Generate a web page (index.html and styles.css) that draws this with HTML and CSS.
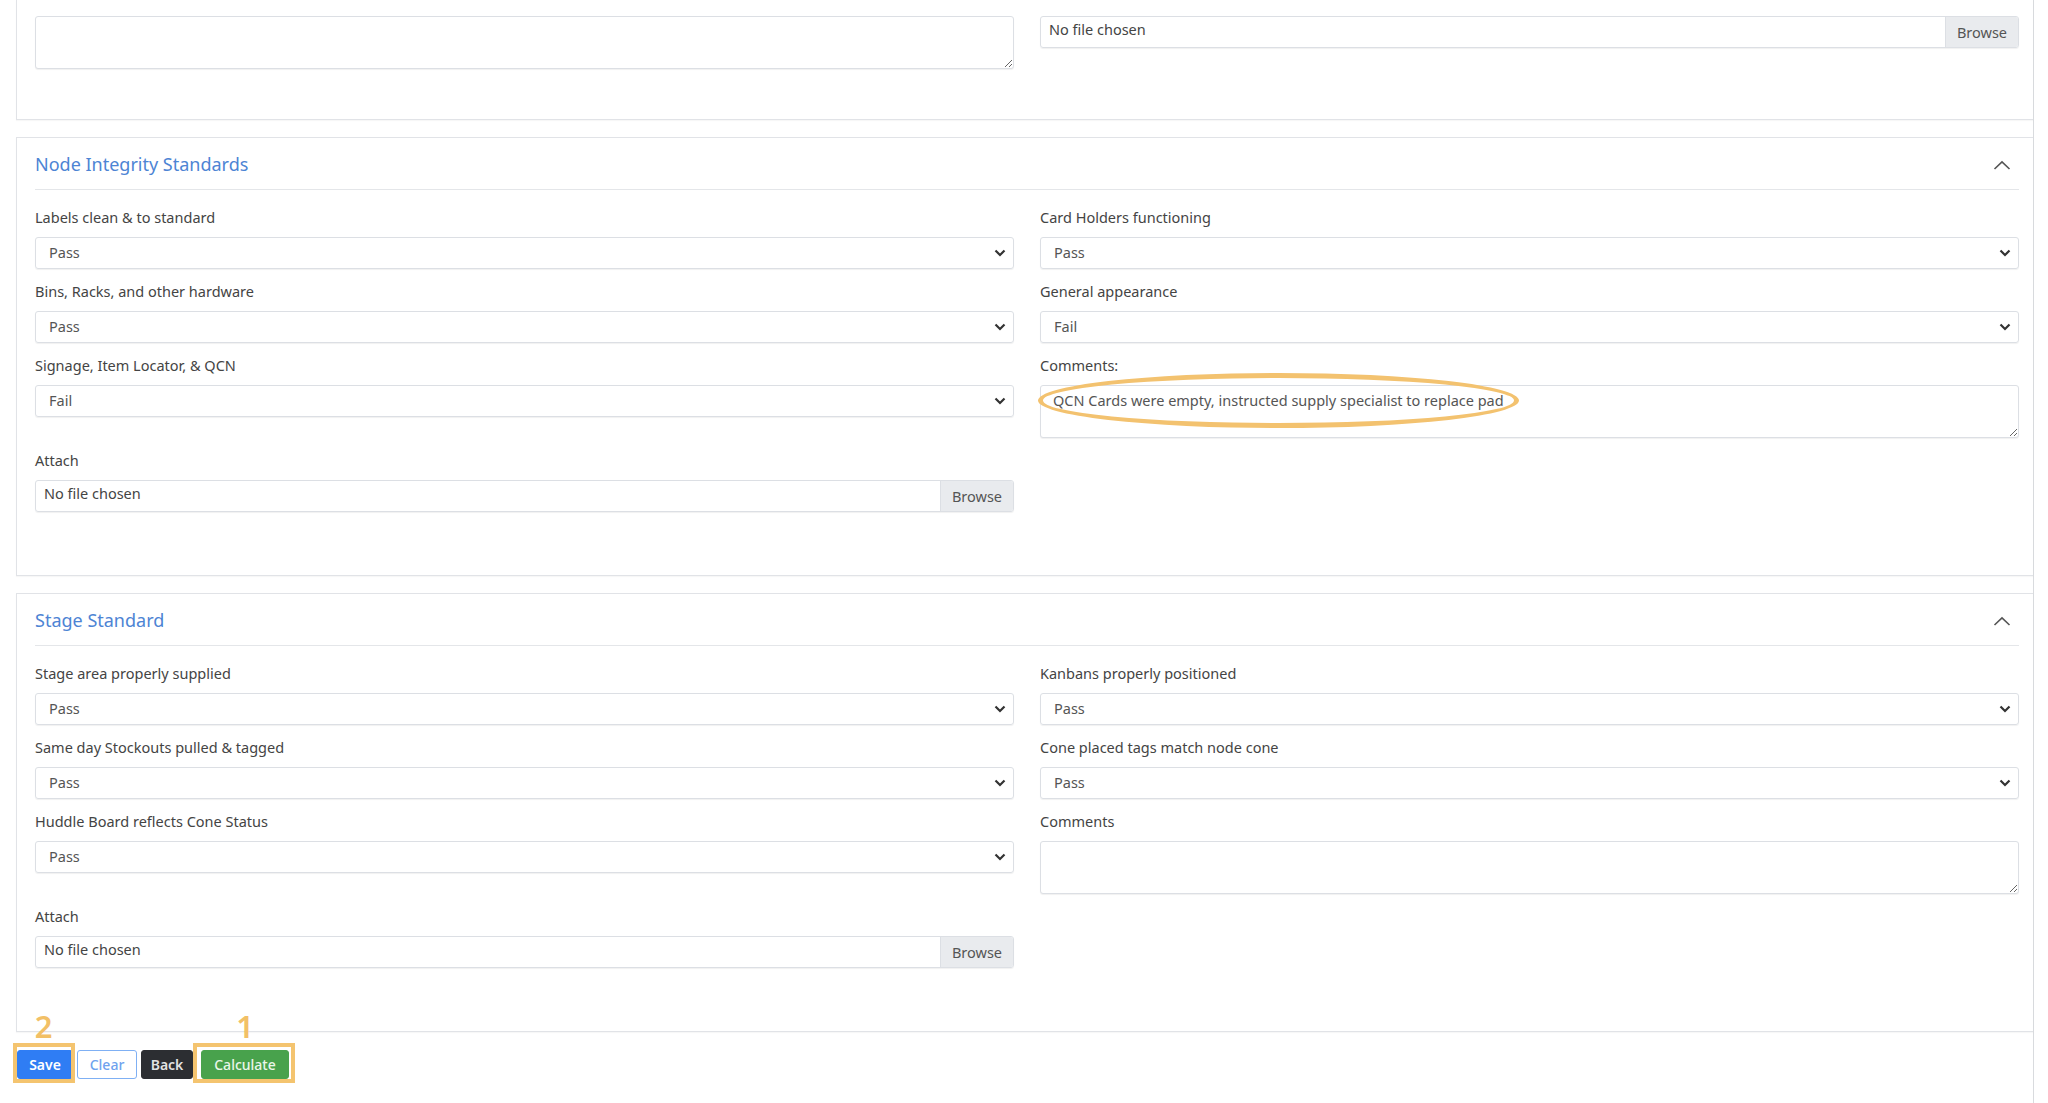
FILE: index.html
```html
<!DOCTYPE html>
<html lang="en">
<head>
<meta charset="utf-8">
<title>Inspection Form</title>
<link rel="stylesheet" href="styles.css">
</head>
<body>
<div class="page">

  <section class="card card-cut">
    <div class="card-body body-first">
      <div class="cols">
        <div class="col">
          <div class="group">
            <textarea class="textarea"></textarea>
          </div>
        </div>
        <div class="col">
          <div class="group">
            <div class="file"><span class="file-text">No file chosen</span><span class="file-btn">Browse</span></div>
          </div>
        </div>
      </div>
    </div>
  </section>

  <section class="card">
    <header class="card-header">
      <h2 class="card-title">Node Integrity Standards</h2>
      <svg class="chev-up" width="18" height="10" viewBox="0 0 18 10"><path d="M1.5 9 L9 1.8 L16.5 9" fill="none" stroke="#555" stroke-width="1.6"/></svg>
    </header>
    <div class="card-body">
      <div class="cols">
        <div class="col">
          <div class="group">
            <label class="label">Labels clean &amp; to standard</label>
            <div class="select"><span>Pass</span><svg width="12" height="8" viewBox="0 0 12 8"><path d="M1.5 1.5 L6 6 L10.5 1.5" fill="none" stroke="#333" stroke-width="2.2"/></svg></div>
          </div>
          <div class="group">
            <label class="label">Bins, Racks, and other hardware</label>
            <div class="select"><span>Pass</span><svg width="12" height="8" viewBox="0 0 12 8"><path d="M1.5 1.5 L6 6 L10.5 1.5" fill="none" stroke="#333" stroke-width="2.2"/></svg></div>
          </div>
          <div class="group">
            <label class="label">Signage, Item Locator, &amp; QCN</label>
            <div class="select"><span>Fail</span><svg width="12" height="8" viewBox="0 0 12 8"><path d="M1.5 1.5 L6 6 L10.5 1.5" fill="none" stroke="#333" stroke-width="2.2"/></svg></div>
          </div>
          <div class="spacer"></div>
          <div class="group">
            <label class="label">Attach</label>
            <div class="file"><span class="file-text">No file chosen</span><span class="file-btn">Browse</span></div>
          </div>
        </div>
        <div class="col">
          <div class="group">
            <label class="label">Card Holders functioning</label>
            <div class="select"><span>Pass</span><svg width="12" height="8" viewBox="0 0 12 8"><path d="M1.5 1.5 L6 6 L10.5 1.5" fill="none" stroke="#333" stroke-width="2.2"/></svg></div>
          </div>
          <div class="group">
            <label class="label">General appearance</label>
            <div class="select"><span>Fail</span><svg width="12" height="8" viewBox="0 0 12 8"><path d="M1.5 1.5 L6 6 L10.5 1.5" fill="none" stroke="#333" stroke-width="2.2"/></svg></div>
          </div>
          <div class="group">
            <label class="label">Comments:</label>
            <div class="annot-wrap">
              <textarea class="textarea">QCN Cards were empty, instructed supply specialist to replace pad</textarea>
              <div class="ellipse"></div>
            </div>
          </div>
        </div>
      </div>
    </div>
  </section>

  <section class="card">
    <header class="card-header">
      <h2 class="card-title">Stage Standard</h2>
      <svg class="chev-up" width="18" height="10" viewBox="0 0 18 10"><path d="M1.5 9 L9 1.8 L16.5 9" fill="none" stroke="#555" stroke-width="1.6"/></svg>
    </header>
    <div class="card-body">
      <div class="cols">
        <div class="col">
          <div class="group">
            <label class="label">Stage area properly supplied</label>
            <div class="select"><span>Pass</span><svg width="12" height="8" viewBox="0 0 12 8"><path d="M1.5 1.5 L6 6 L10.5 1.5" fill="none" stroke="#333" stroke-width="2.2"/></svg></div>
          </div>
          <div class="group">
            <label class="label">Same day Stockouts pulled &amp; tagged</label>
            <div class="select"><span>Pass</span><svg width="12" height="8" viewBox="0 0 12 8"><path d="M1.5 1.5 L6 6 L10.5 1.5" fill="none" stroke="#333" stroke-width="2.2"/></svg></div>
          </div>
          <div class="group">
            <label class="label">Huddle Board reflects Cone Status</label>
            <div class="select"><span>Pass</span><svg width="12" height="8" viewBox="0 0 12 8"><path d="M1.5 1.5 L6 6 L10.5 1.5" fill="none" stroke="#333" stroke-width="2.2"/></svg></div>
          </div>
          <div class="spacer"></div>
          <div class="group">
            <label class="label">Attach</label>
            <div class="file"><span class="file-text">No file chosen</span><span class="file-btn">Browse</span></div>
          </div>
        </div>
        <div class="col">
          <div class="group">
            <label class="label">Kanbans properly positioned</label>
            <div class="select"><span>Pass</span><svg width="12" height="8" viewBox="0 0 12 8"><path d="M1.5 1.5 L6 6 L10.5 1.5" fill="none" stroke="#333" stroke-width="2.2"/></svg></div>
          </div>
          <div class="group">
            <label class="label">Cone placed tags match node cone</label>
            <div class="select"><span>Pass</span><svg width="12" height="8" viewBox="0 0 12 8"><path d="M1.5 1.5 L6 6 L10.5 1.5" fill="none" stroke="#333" stroke-width="2.2"/></svg></div>
          </div>
          <div class="group">
            <label class="label">Comments</label>
            <textarea class="textarea"></textarea>
          </div>
        </div>
      </div>
    </div>
  </section>

  <div class="toolbar">
    <div class="mark mark-save">
      <button class="btn btn-save">Save</button>
      <span class="frame frame-save"></span>
      <span class="digit">2</span>
    </div>
    <button class="btn btn-clear">Clear</button>
    <button class="btn btn-back">Back</button>
    <div class="mark mark-calc">
      <button class="btn btn-calc">Calculate</button>
      <span class="frame frame-calc"></span>
      <span class="digit">1</span>
    </div>
  </div>

</div>
</body>
</html>
```

FILE: styles.css
```css
* { box-sizing: border-box; }

html, body {
  margin: 0;
  padding: 0;
  background: #ffffff;
}

body {
  font-family: "Noto Sans", "Open Sans", sans-serif;
  font-size: 14.5px;
  color: #404040;
  width: 2048px;
  height: 1103px;
  overflow: hidden;
}

.page {
  width: 2034px;
  height: 1103px;
  padding-left: 16px;
  border-right: 1px solid #d9dbde;
}

.card {
  border: 1px solid #e1e3e7;
  border-right: none;
  padding: 0 14px 0 18px;
  margin-bottom: 17px;
  background: #fff;
  box-shadow: 0 1px 1px rgba(0, 0, 0, 0.03);
}

.card-cut {
  border-top: none;
}

.card-header {
  height: 52px;
  display: flex;
  align-items: center;
  justify-content: space-between;
  border-bottom: 1px solid #e4e6e9;
}

.card-title {
  margin: 0;
  font-size: 18px;
  font-weight: 400;
  color: #4d84d4;
}

.chev-up {
  margin-right: 8px;
  margin-top: 2px;
}

.card-body {
  padding: 17px 0 51px;
}

.body-first {
  padding: 16px 0 38px;
}

.cols {
  display: grid;
  grid-template-columns: 979px 979px;
  column-gap: 26px;
}

.group {
  margin-bottom: 12px;
}

.spacer {
  height: 21px;
}

.label {
  display: block;
  line-height: 20px;
  height: 20px;
  margin-bottom: 10px;
  color: #444;
}

.select {
  height: 32px;
  border: 1px solid #dcdfe4;
  border-radius: 3px;
  box-shadow: 0 1px 1px rgba(0, 0, 0, 0.06);
  display: flex;
  align-items: center;
  justify-content: space-between;
  padding: 0 7px 3px 13px;
  color: #555;
}

.select svg {
  margin-top: 3px;
}

.textarea {
  display: block;
  width: 100%;
  height: 53px;
  border: 1px solid #dcdfe4;
  border-radius: 3px;
  box-shadow: 0 1px 1px rgba(0, 0, 0, 0.06);
  padding: 4px 12px;
  font-family: "Noto Sans", "Open Sans", sans-serif;
  font-size: 14.5px;
  line-height: 20px;
  color: #555;
  resize: vertical;
  margin: 0;
}

.file {
  height: 32px;
  border: 1px solid #dcdfe4;
  border-radius: 3px;
  box-shadow: 0 1px 1px rgba(0, 0, 0, 0.06);
  display: flex;
  overflow: hidden;
}

.file-text {
  flex: 1;
  padding: 2px 8px 0;
  line-height: 20px;
  color: #444;
}

.file-btn {
  width: 73px;
  background: #e9ebee;
  border-left: 1px solid #dcdfe4;
  display: flex;
  align-items: center;
  justify-content: center;
  color: #555;
}

.annot-wrap {
  position: relative;
}

.ellipse {
  position: absolute;
  left: -2px;
  top: -12px;
  width: 481px;
  height: 55px;
  border: 5px solid #f3c26f;
  border-radius: 50%;
  pointer-events: none;
}

.toolbar {
  display: flex;
  align-items: flex-start;
  gap: 4px;
  padding-top: 1px;
  padding-left: 1px;
}

.mark {
  position: relative;
}

.mark-calc {
  margin-left: 4px;
}

.btn {
  display: block;
  height: 29px;
  border: 1px solid transparent;
  border-radius: 3px;
  font-family: "Noto Sans", "Open Sans", sans-serif;
  font-size: 14px;
  font-weight: 600;
  padding: 0;
  margin: 0;
  line-height: 27px;
  text-align: center;
}

.btn-save {
  width: 56px;
  background: #2f7df4;
  border-color: #2f7df4;
  color: #fff;
}

.btn-clear {
  width: 60px;
  background: #fff;
  border-color: #7fb0f4;
  color: #6ea2ee;
  font-weight: 500;
}

.btn-back {
  width: 52px;
  background: #2c2e32;
  border-color: #2c2e32;
  color: #e2e2e2;
}

.btn-calc {
  width: 88px;
  background: #48a24c;
  border-color: #48a24c;
  color: #eaf6ea;
  font-weight: 500;
}

.frame {
  position: absolute;
  top: -7px;
  bottom: -4px;
  border: 4px solid #f4c46f;
  pointer-events: none;
}

.frame-save {
  left: -4px;
  right: -2px;
}

.frame-calc {
  left: -8px;
  right: -6px;
}

.digit {
  position: absolute;
  top: -35px;
  left: 0;
  right: 0;
  height: 22px;
  line-height: 22px;
  text-align: center;
  font-size: 31px;
  font-weight: 600;
  color: #f2c066;
}

.mark-save .digit {
  margin-left: -3px;
}
```
